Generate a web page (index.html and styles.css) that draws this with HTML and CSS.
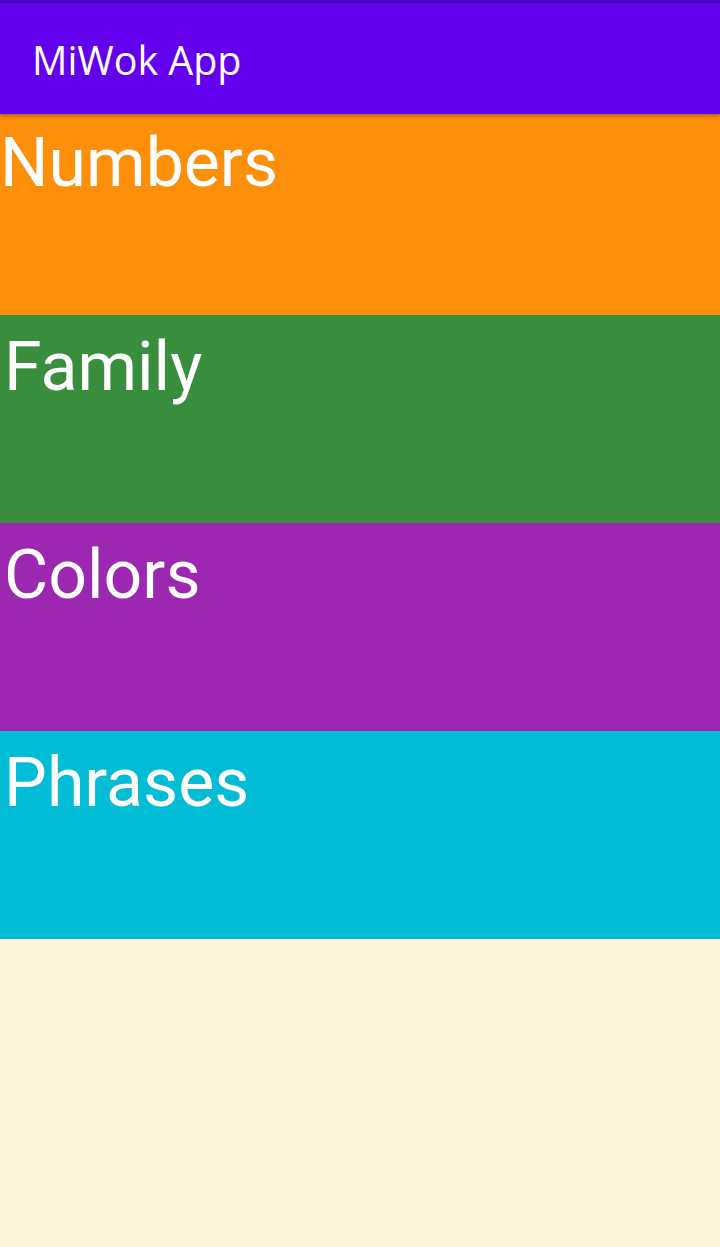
FILE: index.html
```html
<!DOCTYPE html>
<html>
<head>
<meta charset="utf-8">
<link rel="stylesheet" href="styles.css">
</head>
<body>
<div class="status"></div>
<header class="appbar"><span class="title">MiWok App</span></header>
<main class="list">
  <div class="cat numbers">Numbers</div>
  <div class="cat family">Family</div>
  <div class="cat colors">Colors</div>
  <div class="cat phrases">Phrases</div>
</main>
</body>
</html>
```
FILE: styles.css
```css
html, body {
  margin: 0;
  padding: 0;
}
body {
  width: 720px;
  height: 1247px;
  background: #fdf6dc;
  font-family: Roboto, "Liberation Sans", sans-serif;
  overflow: hidden;
}
.status {
  height: 3px;
  background: #4a00c4;
}
.appbar {
  position: relative;
  z-index: 2;
  height: 111px;
  background: #6200ee;
  box-shadow: 0 2px 4px rgba(0,0,0,0.3);
  display: flex;
  align-items: center;
  padding-left: 32px;
}
.title {
  font-family: "Open Sans", "Noto Sans", sans-serif;
  font-size: 39.4px;
  color: #fff;
  margin-top: 3px;
}
.list {
  display: flex;
  flex-direction: column;
}
.cat {
  height: 208px;
  color: #fff;
  font-size: 68px;
  line-height: 1;
  box-sizing: border-box;
  padding-top: 18px;
  padding-left: 4px;
}
.numbers {
  height: 201px;
  background: #fe8f0b;
  padding-top: 15px;
  padding-left: 0;
}
.family { background: #388e3c; }
.colors { background: #9c27b0; }
.phrases { background: #00bcd4; }
```
